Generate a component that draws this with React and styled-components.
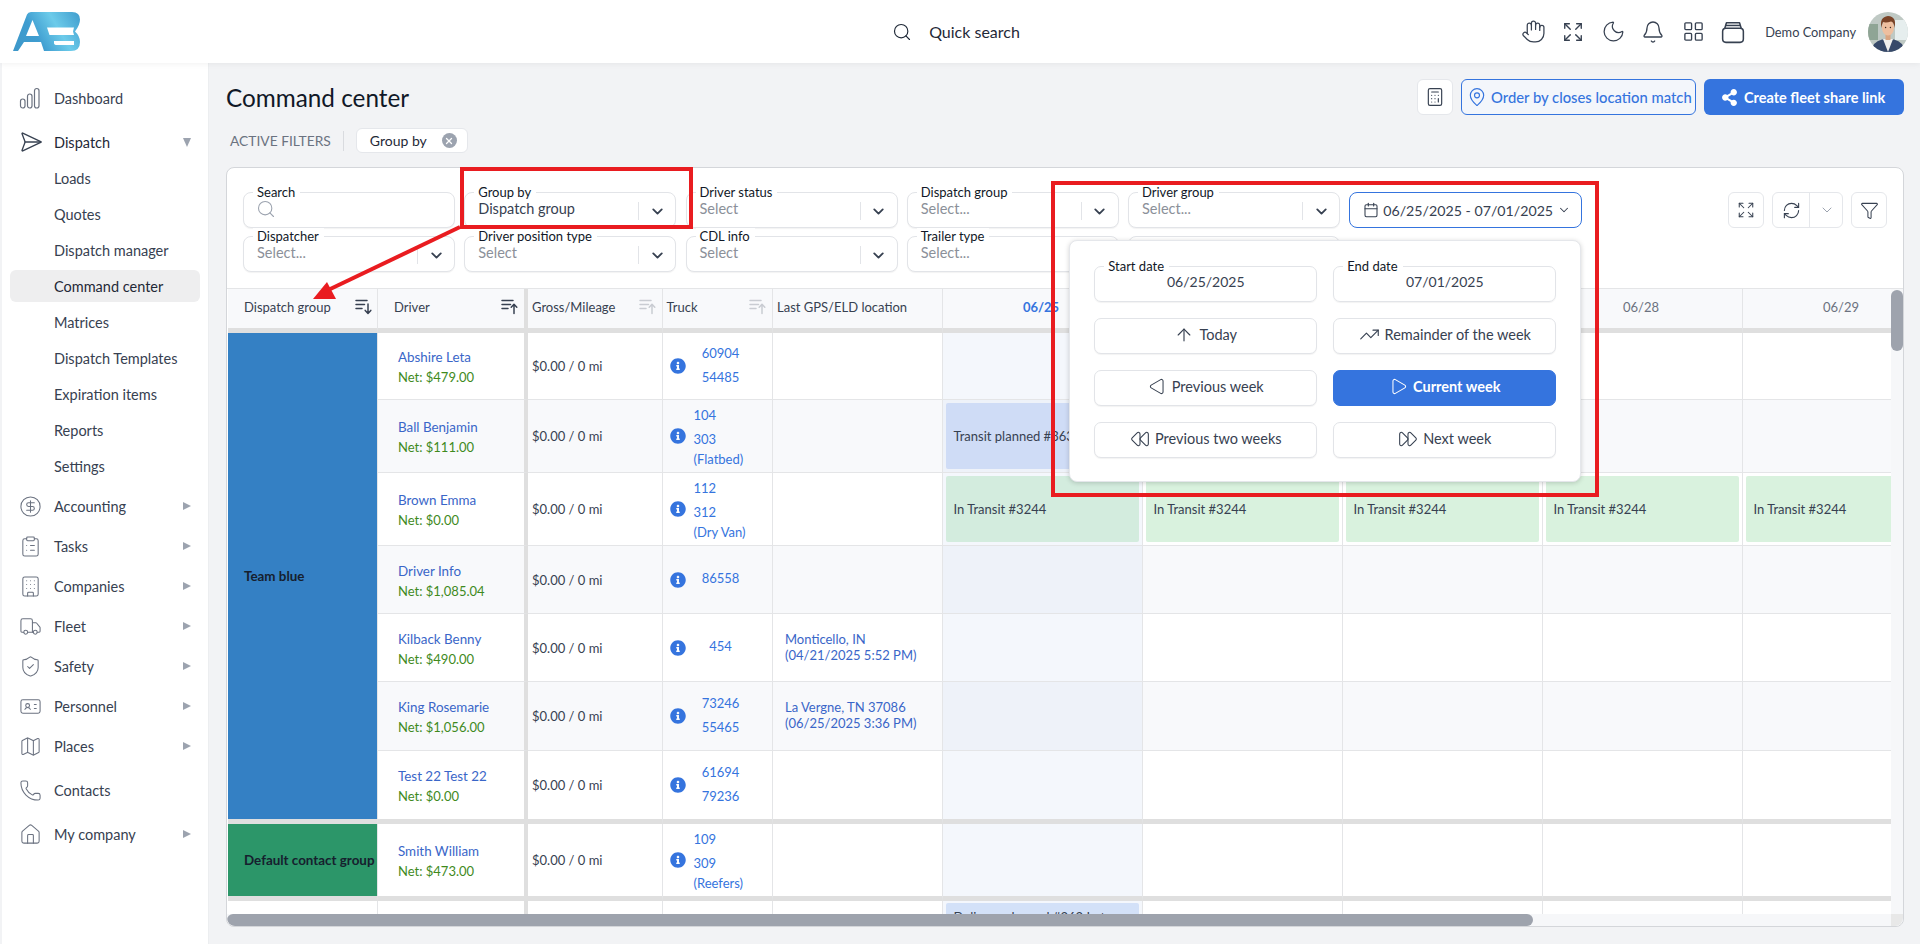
import React from 'react';
import styled, { createGlobalStyle } from 'styled-components';
import {
  Hand, Expand, Moon, Bell, LayoutGrid, Calculator, MapPin, Search, ChevronDown, RefreshCw, Funnel,
  Calendar, ArrowUp, TrendingUp, Play, Rewind, FastForward, SendHorizontal, CircleDollarSign,
  ClipboardList, Building, Truck, ShieldCheck, IdCard, Map as MapIcon, Phone, House, X,
} from 'lucide-react';
import { FaShareAlt, FaInfoCircle } from 'react-icons/fa';

const BLUE = '#3574de';
const FONT = `Lato, "Noto Sans", sans-serif`;

const GlobalStyle = createGlobalStyle`
  * { box-sizing: border-box; }
  html, body { margin: 0; padding: 0; height: 100%; overflow: hidden; }
  body { font-family: ${FONT}; background: #f2f3f5; color: #1f2937; }
`;

const DashIcon = () => (
  <svg width="22" height="22" viewBox="0 0 22 22" fill="none" stroke="#6b7280" strokeWidth="1.2">
    <rect x="1.5" y="12" width="4.5" height="9" rx="2.2" />
    <rect x="8.5" y="7" width="4.5" height="14" rx="2.2" />
    <rect x="15.5" y="1.5" width="4.5" height="19.5" rx="2.2" />
  </svg>
);

const BoxIcon = () => (
  <svg width="24" height="24" viewBox="0 0 22 22" fill="none" stroke="#374151" strokeWidth="1.4" strokeLinejoin="round">
    <rect x="1.5" y="7.5" width="19" height="13" rx="3" />
    <path d="M3.5 7.5 L5 2.5 H17 L18.5 7.5" />
    <path d="M4.5 5 H17.5" />
  </svg>
);

const SortIcon = ({ up, muted }) => {
  const c = muted ? '#c9ccd2' : '#374151';
  return (
    <svg width="17" height="17" viewBox="0 0 17 17" fill="none" stroke={c} strokeWidth="1.5" strokeLinecap="round" strokeLinejoin="round">
      <path d="M1 2.5 H12 M1 6.5 H9.5 M1 10.5 H7" />
      {up ? <path d="M13 15.5 V6.5 M10.2 9.2 L13 6.2 L15.8 9.2" /> : <path d="M13 6 V15 M10.2 12.4 L13 15.4 L15.8 12.4" />}
    </svg>
  );
};

const Logo = () => (
  <svg width="67" height="39" viewBox="0 0 67 39" aria-label="logo">
    <defs>
      <linearGradient id="lg" gradientUnits="userSpaceOnUse" x1="0" y1="39" x2="67" y2="0">
        <stop offset="0" stopColor="#3d97c9" />
        <stop offset="0.35" stopColor="#3f9dd0" />
        <stop offset="0.65" stopColor="#6ccbea" />
        <stop offset="1" stopColor="#3f9ccd" />
      </linearGradient>
    </defs>
    <path
      fill="url(#lg)"
      fillRule="evenodd"
      d="M0 39 L14 2.5 Q15 0 18 0 H59 Q67 0 67 7.5 Q67 13 62 19.5 Q67 24 67 30 Q67 39 58 39 H31 L28 30 H11 L5 39 Z
         M13 24 H26 L19.5 8 Z
         M34 15.6 H61 L60 19.5 L61 23 H36.5 Z
         M41 29 H61 V33 H44 Q41 33 41 31 Z"
    />
  </svg>
);

const Avatar = () => (
  <svg width="40" height="40" viewBox="0 0 40 40" aria-label="avatar">
    <defs><clipPath id="av"><circle cx="20" cy="20" r="20" /></clipPath></defs>
    <g clipPath="url(#av)">
      <rect width="40" height="40" fill="#bfc9c4" />
      <rect x="27" y="8" width="13" height="20" fill="#e6eeee" />
      <rect x="0" y="12" width="10" height="16" fill="#8fa595" />
      <path d="M3 40 Q4 30 14 27.5 L26 27.5 Q36 30 37 40 Z" fill="#37496a" />
      <path d="M15 27 L20 40 L25 27 Z" fill="#f1f0ee" />
      <rect x="17.5" y="21" width="5" height="7" fill="#d9a582" />
      <ellipse cx="20" cy="15.5" rx="6" ry="8" fill="#eebf9f" />
      <circle cx="17.6" cy="15.5" r="0.7" fill="#3b2a20" />
      <circle cx="22.4" cy="15.5" r="0.7" fill="#3b2a20" />
      <path d="M13.5 16 Q11 5 20 4 Q29 4.5 26.5 16 Q26 10 23 9.5 Q18 11 15 10 Q14 12 13.5 16 Z" fill="#7a4327" />
    </g>
  </svg>
);

const nav = [
  { label: 'Dashboard', icon: <DashIcon />, top: 17 },
  { label: 'Dispatch', icon: <SendHorizontal size={24} strokeWidth={1.3} color="#374151" />, top: 8, open: true, dark: true },
];
const subNav = ['Loads', 'Quotes', 'Dispatch manager', 'Command center', 'Matrices', 'Dispatch Templates', 'Expiration items', 'Reports', 'Settings'];
const nav2 = [
  { label: 'Accounting', icon: CircleDollarSign, caret: true, top: 2 },
  { label: 'Tasks', icon: ClipboardList, caret: true },
  { label: 'Companies', icon: Building, caret: true },
  { label: 'Fleet', icon: Truck, caret: true },
  { label: 'Safety', icon: ShieldCheck, caret: true },
  { label: 'Personnel', icon: IdCard, caret: true },
  { label: 'Places', icon: MapIcon, caret: true },
  { label: 'Contacts', icon: Phone, top: 4 },
  { label: 'My company', icon: House, caret: true, top: 4 },
];

const filters = [
  { label: 'Search', search: true },
  { label: 'Group by', value: 'Dispatch group' },
  { label: 'Driver status', placeholder: 'Select' },
  { label: 'Dispatch group', placeholder: 'Select...' },
  { label: 'Driver group', placeholder: 'Select...' },
  null,
  { label: 'Dispatcher', placeholder: 'Select...' },
  { label: 'Driver position type', placeholder: 'Select' },
  { label: 'CDL info', placeholder: 'Select' },
  { label: 'Trailer type', placeholder: 'Select...' },
  {},
];

const groups = [
  {
    name: 'Team blue', color: '#3480c4',
    rows: [
      { h: 67, name: 'Abshire Leta', net: '$479.00', truck: ['60904', '54485'] },
      { h: 73, name: 'Ball Benjamin', net: '$111.00', truck: ['104', '303'], trailer: '(Flatbed)', alt: true, events: { 0: ['Transit planned #363', 'plan'] } },
      { h: 73, name: 'Brown Emma', net: '$0.00', truck: ['112', '312'], trailer: '(Dry Van)', events: { 0: ['In Transit #3244', 'transit'], 1: ['In Transit #3244', 'transit'], 2: ['In Transit #3244', 'transit'], 3: ['In Transit #3244', 'transit'], 4: ['In Transit #3244', 'transit'] } },
      { h: 68, name: 'Driver Info', net: '$1,085.04', truck: ['86558'], alt: true },
      { h: 68, name: 'Kilback Benny', net: '$490.00', truck: ['454'], gps: ['Monticello, IN', '(04/21/2025 5:52 PM)'] },
      { h: 69, name: 'King Rosemarie', net: '$1,056.00', truck: ['73246', '55465'], alt: true, gps: ['La Vergne, TN 37086', '(06/25/2025 3:36 PM)'] },
      { h: 73, name: 'Test 22 Test 22', net: '$0.00', truck: ['61694', '79236'] },
    ],
  },
  {
    name: 'Default contact group', color: '#2c9669',
    rows: [{ h: 77, name: 'Smith William', net: '$473.00', truck: ['109', '309'], trailer: '(Reefers)' }],
  },
];

const dates = ['06/25', '06/26', '06/27', '06/28', '06/29'];
const rowHeights = ['44px', ...groups.flatMap(g => g.rows.map(r => `${r.h}px`)), '70px'].join(' ');

const Page = styled.div`
  position: relative;
  width: 1920px;
  height: 944px;
  overflow: hidden;
`;

const TopBar = styled.header`
  height: 63px;
  background: #fff;
  box-shadow: 0 1px 6px rgba(0, 0, 0, 0.06);
  position: relative;
  z-index: 2;
  display: grid;
  grid-template-columns: 1fr auto 1fr;
  align-items: center;
  padding: 0 12px 0 13px;
`;

const QuickSearch = styled.div`
  display: flex;
  align-items: center;
  gap: 17px;
  font-size: 16px;
  color: #1f2937;
  margin-right: 9px;
`;

const TopRight = styled.div`
  justify-self: end;
  display: flex;
  align-items: center;
`;

const TopIcons = styled.div`
  display: flex;
  align-items: center;
  gap: 18px;
  color: #374151;
  margin-right: 21px;
`;

const TopSlot = styled.span`
  width: 22px;
  height: 22px;
  display: flex;
  align-items: center;
  justify-content: center;
  & > svg { flex: none; }
`;

const CompanyName = styled.span`
  font-size: 12.8px;
  color: #374151;
  margin-right: 12px;
`;

const Body = styled.div`
  display: flex;
  height: 881px;
`;

const Sidebar = styled.aside`
  width: 207px;
  margin-left: 2px;
  background: #fff;
  border-right: 1px solid #eceef0;
  flex: none;
`;

const NavItem = styled.div`
  height: ${p => p.$h || 40}px;
  margin-top: ${p => p.$top || 0}px;
  display: flex;
  align-items: center;
  padding-left: 17px;
  font-size: 14.5px;
  color: ${p => (p.$dark ? '#1f2937' : '#374151')};
`;

const NavIcon = styled.span`
  width: 35px;
  display: flex;
  align-items: center;
  flex: none;
`;

const Caret = styled.i`
  margin-left: auto;
  margin-right: 17px;
  width: 0;
  height: 0;
  ${p => p.$open
    ? 'border-left: 4.5px solid transparent; border-right: 4.5px solid transparent; border-top: 9px solid #9ca3af;'
    : 'border-top: 4.5px solid transparent; border-bottom: 4.5px solid transparent; border-left: 8px solid #9ca3af;'}
`;

const SubItem = styled.div`
  height: ${p => (p.$active ? 32 : 36)}px;
  margin: ${p => (p.$active ? '2px 8px 2px 8px' : '0')};
  padding-left: ${p => (p.$active ? 44 : 52)}px;
  display: flex;
  align-items: center;
  border-radius: 6px;
  font-size: 14.5px;
  color: ${p => (p.$active ? '#1f2937' : '#374151')};
  background: ${p => (p.$active ? '#eeeeef' : 'transparent')};
`;

const Main = styled.main`
  flex: 1;
  min-width: 0;
  padding: 16px 16px 0 17px;
`;

const TitleRow = styled.div`
  display: flex;
  align-items: center;
  justify-content: space-between;
  height: 36px;
`;

const Title = styled.h1`
  margin: 0;
  font-size: 24.3px;
  font-weight: 400;
  color: #111827;
`;

const Actions = styled.div`
  display: flex;
  gap: 8px;
`;

const IconBtn = styled.button`
  width: ${p => p.$w || 36}px;
  height: 36px;
  padding: 0;
  display: flex;
  align-items: center;
  justify-content: center;
  background: #fff;
  border: 1px solid #e5e7eb;
  border-radius: 6px;
  color: #374151;
`;

const OutlineBtn = styled.button`
  width: 235px;
  height: 36px;
  display: flex;
  align-items: center;
  gap: 4px;
  padding: 0 0 0 5px;
  background: #f3f6fb;
  border: 1px solid ${BLUE};
  border-radius: 6px;
  color: ${BLUE};
  font: 500 14.8px ${FONT};
  white-space: nowrap;
`;

const PrimaryBtn = styled.button`
  width: 200px;
  height: 36px;
  display: flex;
  align-items: center;
  gap: 6px;
  padding: 0 0 0 17px;
  background: ${BLUE};
  border: none;
  border-radius: 6px;
  color: #fff;
  font: 700 14.5px ${FONT};
`;

const ActiveRow = styled.div`
  display: flex;
  align-items: center;
  height: 25px;
  margin-top: 13px;
  padding-left: 4px;
`;

const ActiveLabel = styled.span`
  font-size: 13.8px;
  color: #6b7280;
  padding-right: 12px;
  margin-right: 12px;
  border-right: 1px solid #d9dbdf;
  line-height: 20px;
`;

const Chip = styled.span`
  width: 112px;
  height: 25px;
  display: flex;
  align-items: center;
  justify-content: space-between;
  padding: 0 10px 0 13px;
  background: #fff;
  border: 1px solid #e5e7eb;
  border-radius: 6px;
  font-size: 14px;
  color: #1f2937;
`;

const ChipClear = styled.span`
  width: 15px;
  height: 15px;
  border-radius: 50%;
  background: #9ca3af;
  color: #fff;
  display: flex;
  align-items: center;
  justify-content: center;
`;

const Panel = styled.section`
  margin-top: 14px;
  height: 760px;
  background: #fff;
  border: 1px solid #d4d6da;
  border-radius: 8px;
`;

const FilterBar = styled.div`
  height: 120px;
  padding: 24px 16px 0 16px;
  display: flex;
  justify-content: space-between;
  align-items: flex-start;
`;

const FilterGrid = styled.div`
  display: grid;
  grid-template-columns: repeat(5, 212px) 233px;
  grid-auto-rows: 36px;
  column-gap: 9.25px;
  row-gap: 8px;
`;

const Field = styled.div`
  position: relative;
  height: 36px;
  background: #fff;
  border: 1px solid #e2e4e8;
  border-radius: 8px;
  box-shadow: 0 1px 1px rgba(0, 0, 0, 0.05);
  padding: 7px 0 0 13px;
  font-size: 14.5px;
  color: ${p => (p.$muted ? '#8b9099' : '#374151')};
  line-height: 18px;
`;

const FieldLabel = styled.label`
  position: absolute;
  top: -9px;
  left: 9px;
  padding: 0 5px 0 4px;
  background: #fff;
  font-size: 13px;
  line-height: 16px;
  color: #111827;
`;

const FieldEnd = styled.span`
  position: absolute;
  right: 0;
  top: 9px;
  width: 37px;
  height: 18px;
  border-left: 1px solid #e2e4e8;
  display: flex;
  align-items: center;
  justify-content: center;
  color: #374151;
`;

const SearchGlyph = styled(Search)`
  margin-left: -1px;
  margin-top: -1px;
`;

const DateField = styled.div`
  position: relative;
  height: 36px;
  display: flex;
  align-items: center;
  padding-left: 13px;
  gap: 4px;
  background: #fff;
  border: 1px solid ${BLUE};
  border-radius: 8px;
  font-size: 14.2px;
  color: #374151;
  white-space: nowrap;
  & > svg { flex: none; }
`;

const DateChevron = styled.span`
  display: flex;
  margin-left: auto;
  margin-right: 13px;
`;

const Popup = styled.div`
  position: absolute;
  right: 0;
  top: 47px;
  width: 512px;
  height: 242px;
  z-index: 5;
  padding: 25px 24px 0 24px;
  display: grid;
  grid-template-columns: 223px 223px;
  grid-auto-rows: 35.6px;
  column-gap: 16px;
  row-gap: 16.4px;
  background: #fff;
  border-radius: 8px;
  border: 1px solid #e5e7eb;
  box-shadow: 0 1px 5px rgba(0, 0, 0, 0.18);
`;

const DateBox = styled.div`
  position: relative;
  border: 1px solid #e2e4e8;
  border-radius: 7px;
  box-shadow: 0 1px 1px rgba(0, 0, 0, 0.05);
  text-align: center;
  padding-top: 6px;
  font-size: 14px;
  line-height: 18px;
  color: #374151;
`;

const RangeBtn = styled.button`
  display: flex;
  align-items: center;
  justify-content: center;
  gap: 5px;
  padding: 0 0 2px 0;
  border-radius: 7px;
  border: 1px solid ${p => (p.$active ? BLUE : '#e2e4e8')};
  background: ${p => (p.$active ? BLUE : '#fff')};
  color: ${p => (p.$active ? '#fff' : '#374151')};
  box-shadow: ${p => (p.$active ? 'none' : '0 1px 1px rgba(0, 0, 0, 0.05)')};
  font: ${p => (p.$active ? 700 : 400)} 14.5px ${FONT};
`;

const LeftPlay = styled(Play)`
  transform: scaleX(-1);
`;

const Tools = styled.div`
  display: flex;
  gap: 8px;
`;

const SplitBtn = styled.div`
  width: 71px;
  height: 36px;
  display: grid;
  grid-template-columns: 36px 35px;
  border: 1px solid #e5e7eb;
  border-radius: 6px;
  background: #fff;
`;

const SplitPart = styled.span`
  display: flex;
  align-items: center;
  justify-content: center;
  color: ${p => (p.$muted ? '#9ca3af' : '#374151')};
  & + & { border-left: 1px solid #e5e7eb; }
`;

const TableWrap = styled.div`
  border-top: 1px solid #e4e5e7;
  border-radius: 0 0 8px 8px;
  overflow: hidden;
`;

const TableRow = styled.div`
  display: flex;
  height: 625px;
  padding-left: 1px;
`;

const Clip = styled.div`
  flex: 1;
  min-width: 0;
  overflow: hidden;
`;

const Grid = styled.div`
  display: grid;
  width: 1715px;
  grid-template-columns: 150px 150px 134.5px 110.5px 169.5px repeat(5, 200px);
  grid-template-rows: ${rowHeights};
`;

const HeadCell = styled.div`
  display: flex;
  align-items: center;
  justify-content: ${p => (p.$center ? 'center' : 'space-between')};
  padding: 0 ${p => p.$pr ?? 6}px 4px ${p => p.$pl ?? 4}px;
  background: #f8f9fb;
  border-right: ${p => p.$gut ? '4px solid #dfdfdf' : '1px solid #e4e5e7'};
  border-bottom: 5px solid #dfdfdf;
  font-size: 13px;
  font-weight: ${p => (p.$today ? 700 : 400)};
  color: ${p => (p.$today ? BLUE : p.$center ? '#6b7280' : '#374151')};
`;

const GroupCell = styled.div`
  grid-row: span ${p => p.$span};
  display: flex;
  align-items: center;
  padding-left: 16px;
  background: ${p => p.$color};
  border-bottom: 5px solid #dfdfdf;
  border-right: 1px solid #e4e5e7;
  font-size: 13.4px;
  font-weight: 700;
  color: #16202e;
  white-space: nowrap;
`;

const Cell = styled.div`
  background: ${p => (p.$today ? (p.$alt ? '#eef2f9' : '#f4f7fc') : p.$alt ? '#f8f9fb' : '#fff')};
  border-right: ${p => p.$gut ? '4px solid #dfdfdf' : '1px solid #e4e5e7'};
  border-bottom: ${p => (p.$last ? '5px solid #dfdfdf' : '1px solid #e4e5e7')};
  font-size: 13px;
  display: flex;
  align-items: center;
  min-width: 0;
`;

const DriverCell = styled(Cell)`
  flex-direction: column;
  align-items: flex-start;
  justify-content: center;
  gap: 4px;
  padding: 2px 0 0 20px;
`;

const DriverName = styled.span`
  color: #3a66c8;
  line-height: 16px;
  font-size: 13.4px;
`;

const Net = styled.span`
  color: #3f8a1d;
  line-height: 16px;
`;

const GrossCell = styled(Cell)`
  padding-left: 4px;
  color: #374151;
`;

const TruckCell = styled(Cell)`
  padding-left: 7px;
  color: ${BLUE};
`;

const TruckNums = styled.div`
  width: 54px;
  margin: -3px 0 0 8px;
  display: flex;
  flex-direction: column;
  align-items: ${p => (p.$left ? 'flex-start' : 'center')};
  line-height: 24px;
`;

const TrailerType = styled.span`
  line-height: 16px;
  white-space: nowrap;
`;

const GpsCell = styled(Cell)`
  flex-direction: column;
  align-items: flex-start;
  justify-content: center;
  padding: 0 0 2px 12px;
  line-height: 16px;
  color: #3a66c8;
`;

const EventBlock = styled.div`
  flex: 1;
  align-self: stretch;
  margin: ${p => (p.$kind === 'next' ? '2px 3px 0 3px' : '3px')};
  padding: ${p => (p.$kind === 'next' ? '6px 0 0 8px' : '0 0 0 8px')};
  display: flex;
  align-items: ${p => (p.$kind === 'next' ? 'flex-start' : 'center')};
  border-radius: 2px;
  background: ${p => (p.$kind === 'transit' ? (p.$first ? '#d3ecde' : '#d9f2de') : p.$kind === 'plan' ? '#cfdcf6' : '#d3e1f8')};
  color: #374151;
  white-space: nowrap;
  overflow: hidden;
`;

const VTrack = styled.div`
  width: 12px;
  background: #f6f7f9;
  flex: none;
`;

const VThumb = styled.div`
  width: 12px;
  height: 61px;
  margin-top: 1px;
  border-radius: 6px;
  background: #9ea3ad;
`;

const HRow = styled.div`
  display: flex;
  height: 12px;
  background: #f6f7f9;
`;

const HThumb = styled.div`
  width: 1306px;
  border-radius: 6px;
  background: #9ea3ad;
`;

const Corner = styled.div`
  width: 12px;
  margin-left: auto;
  background: #e8e8e8;
`;

const RedBox = styled.div`
  position: absolute;
  z-index: 10;
  left: ${p => p.$x}px;
  top: ${p => p.$y}px;
  width: ${p => p.$w}px;
  height: ${p => p.$h}px;
  border: 4.5px solid #e91c20;
  pointer-events: none;
`;

const ArrowSvg = styled.svg`
  position: absolute;
  z-index: 10;
  left: 300px;
  top: 220px;
  pointer-events: none;
`;

const renderFilter = (f, i) => {
  if (f === null) {
    return (
      <DateField key={i}>
        <Calendar size={16} strokeWidth={1.6} />
        <span>06/25/2025 - 07/01/2025</span>
        <DateChevron><ChevronDown size={14} strokeWidth={1.8} /></DateChevron>
        <Popup>
          <DateBox><FieldLabel>Start date</FieldLabel>06/25/2025</DateBox>
          <DateBox><FieldLabel>End date</FieldLabel>07/01/2025</DateBox>
          <RangeBtn><ArrowUp size={20} strokeWidth={1.4} />Today</RangeBtn>
          <RangeBtn><TrendingUp size={21} strokeWidth={1.3} />Remainder of the week</RangeBtn>
          <RangeBtn><LeftPlay size={19} strokeWidth={1.3} />Previous week</RangeBtn>
          <RangeBtn $active><Play size={19} strokeWidth={1.3} />Current week</RangeBtn>
          <RangeBtn><Rewind size={20} strokeWidth={1.3} />Previous two weeks</RangeBtn>
          <RangeBtn><FastForward size={20} strokeWidth={1.3} />Next week</RangeBtn>
        </Popup>
      </DateField>
    );
  }
  return (
    <Field key={i} $muted={!!f.placeholder}>
      {f.label && <FieldLabel>{f.label}</FieldLabel>}
      {f.search && <SearchGlyph size={20} strokeWidth={1.3} color="#9ca3af" />}
      {f.value || f.placeholder}
      {(f.value || f.placeholder) && <FieldEnd><ChevronDown size={17} strokeWidth={2.6} /></FieldEnd>}
    </Field>
  );
};

const App = () => (
  <Page>
    <GlobalStyle />
    <TopBar>
      <Logo />
      <QuickSearch>
        <Search size={20} strokeWidth={1.4} />
        <span>Quick search</span>
      </QuickSearch>
      <TopRight>
        <TopIcons>
          <TopSlot><Hand size={25} strokeWidth={1.2} /></TopSlot>
          <TopSlot><Expand size={22} strokeWidth={1.5} /></TopSlot>
          <TopSlot><Moon size={25} strokeWidth={1.2} /></TopSlot>
          <TopSlot><Bell size={24} strokeWidth={1.3} /></TopSlot>
          <TopSlot><LayoutGrid size={23} strokeWidth={1.4} /></TopSlot>
          <TopSlot><BoxIcon /></TopSlot>
        </TopIcons>
        <CompanyName>Demo Company</CompanyName>
        <Avatar />
      </TopRight>
    </TopBar>
    <Body>
      <Sidebar>
        {nav.map(n => (
          <NavItem key={n.label} $h={36} $top={n.top} $dark={n.dark}>
            <NavIcon>{n.icon}</NavIcon>
            {n.label}
            {n.open && <Caret $open />}
          </NavItem>
        ))}
        {subNav.map(s => <SubItem key={s} $active={s === 'Command center'}>{s}</SubItem>)}
        {nav2.map(n => (
          <NavItem key={n.label} $top={n.top}>
            <NavIcon><n.icon size={23} strokeWidth={1.1} color="#6b7280" /></NavIcon>
            {n.label}
            {n.caret && <Caret />}
          </NavItem>
        ))}
      </Sidebar>
      <Main>
        <TitleRow>
          <Title>Command center</Title>
          <Actions>
            <IconBtn><Calculator size={20} strokeWidth={1.4} /></IconBtn>
            <OutlineBtn><MapPin size={20} strokeWidth={1.4} />Order by closes location match</OutlineBtn>
            <PrimaryBtn><FaShareAlt size={17} />Create fleet share link</PrimaryBtn>
          </Actions>
        </TitleRow>
        <ActiveRow>
          <ActiveLabel>ACTIVE FILTERS</ActiveLabel>
          <Chip>Group by<ChipClear><X size={10} strokeWidth={3} /></ChipClear></Chip>
        </ActiveRow>
        <Panel>
          <FilterBar>
            <FilterGrid>{filters.map(renderFilter)}</FilterGrid>
            <Tools>
              <IconBtn><Expand size={18} strokeWidth={1.4} /></IconBtn>
              <SplitBtn>
                <SplitPart><RefreshCw size={19} strokeWidth={1.4} /></SplitPart>
                <SplitPart $muted><ChevronDown size={16} strokeWidth={1.5} /></SplitPart>
              </SplitBtn>
              <IconBtn><Funnel size={19} strokeWidth={1.3} /></IconBtn>
            </Tools>
          </FilterBar>
          <TableWrap>
            <TableRow>
              <Clip>
                <Grid>
                  <HeadCell $pl={16} $pr={5}>Dispatch group<SortIcon /></HeadCell>
                  <HeadCell $pl={16} $pr={6} $gut>Driver<SortIcon up /></HeadCell>
                  <HeadCell>Gross/Mileage<SortIcon up muted /></HeadCell>
                  <HeadCell $pr={6}>Truck<SortIcon up muted /></HeadCell>
                  <HeadCell>Last GPS/ELD location</HeadCell>
                  {dates.map((d, i) => <HeadCell key={d} $center $today={i === 0}>{d}</HeadCell>)}
                  {groups.map(g => g.rows.map((r, ri) => {
                    const last = ri === g.rows.length - 1;
                    return (
                      <React.Fragment key={r.name}>
                        {ri === 0 && <GroupCell $span={g.rows.length} $color={g.color}>{g.name}</GroupCell>}
                        <DriverCell $alt={r.alt} $last={last} $gut>
                          <DriverName>{r.name}</DriverName>
                          <Net>Net: {r.net}</Net>
                        </DriverCell>
                        <GrossCell $alt={r.alt} $last={last}>$0.00 / 0 mi</GrossCell>
                        <TruckCell $alt={r.alt} $last={last}>
                          <FaInfoCircle size={16} />
                          <TruckNums $left={!!r.trailer}>
                            {r.truck.map(t => <span key={t}>{t}</span>)}
                            {r.trailer && <TrailerType>{r.trailer}</TrailerType>}
                          </TruckNums>
                        </TruckCell>
                        <GpsCell $alt={r.alt} $last={last}>
                          {r.gps && r.gps.map(l => <span key={l}>{l}</span>)}
                        </GpsCell>
                        {dates.map((d, i) => {
                          const ev = r.events && r.events[i];
                          return (
                            <Cell key={d} $alt={r.alt} $last={last} $today={i === 0}>
                              {ev && <EventBlock $kind={ev[1]} $first={i === 0}>{ev[0]}</EventBlock>}
                            </Cell>
                          );
                        })}
                      </React.Fragment>
                    );
                  }))}
                  <Cell />
                  <Cell $gut />
                  <Cell />
                  <Cell />
                  <Cell />
                  <Cell $today><EventBlock $kind="next">Delivery planned #363 In t</EventBlock></Cell>
                  <Cell />
                  <Cell />
                  <Cell />
                  <Cell />
                </Grid>
              </Clip>
              <VTrack><VThumb /></VTrack>
            </TableRow>
            <HRow><HThumb /><Corner /></HRow>
          </TableWrap>
        </Panel>
      </Main>
    </Body>
    <RedBox $x={460} $y={167} $w={233} $h={62} />
    <RedBox $x={1051} $y={181} $w={548} $h={316} />
    <ArrowSvg width="170" height="90" viewBox="0 0 170 90">
      <path d="M160 7 L24 72" stroke="#e91c20" strokeWidth="4" fill="none" />
      <path d="M13 79 L27 62 L36 79 Z" fill="#e91c20" />
    </ArrowSvg>
  </Page>
);

export default App;
